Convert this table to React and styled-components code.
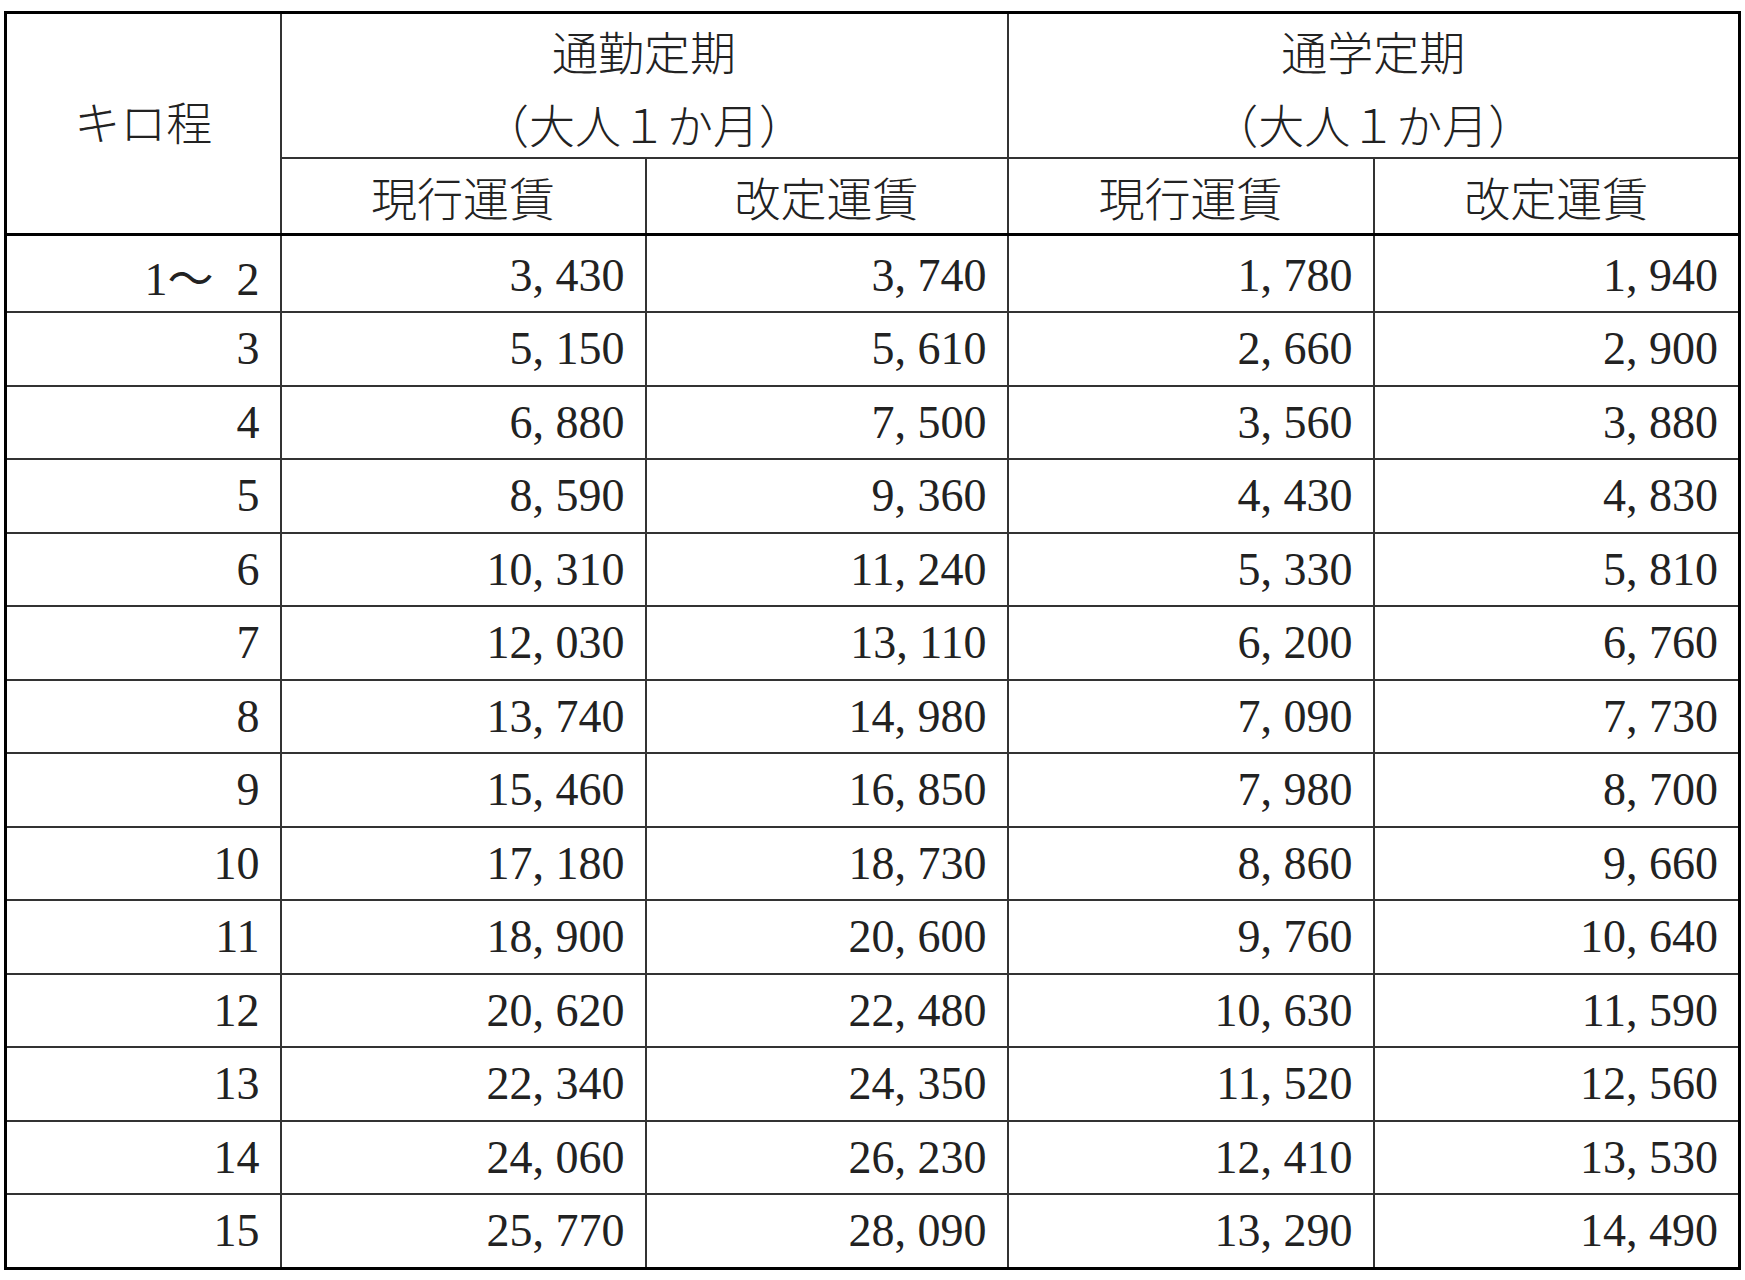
import React from 'react';
import styled, { createGlobalStyle } from 'styled-components';

const GlobalStyle = createGlobalStyle`
  html, body {
    margin: 0;
    background: #fff;
  }
`;

const Page = styled.div`
  padding: 11px 0 0 4px;
`;

const Table = styled.table`
  width: 1734px;
  table-layout: fixed;
  border-collapse: collapse;
  border: 3px solid #000;
  color: #222;
`;

const Col = styled.col`
  width: ${props => props.$w}px;
`;

const HeadCell = styled.th`
  font-family: "Noto Sans CJK JP", sans-serif;
  font-weight: 300;
  font-size: 46px;
  line-height: 1;
  padding: 0;
  border: 2px solid #333;
  border-bottom: ${props => (props.$thick ? '3px solid #000' : '2px solid #333')};
  height: ${props => props.$h}px;
  vertical-align: ${props => (props.$top ? 'top' : 'middle')};
`;

const CornerCell = styled(HeadCell)`
  padding-bottom: 8px;
`;

const GroupTitle = styled.div`
  display: flex;
  flex-direction: column;
  align-items: center;
  gap: 27px;
  padding-top: 13px;
`;

const Cell = styled.td`
  font-family: "Liberation Serif", "Noto Sans CJK JP", serif;
  font-size: 46px;
  text-align: right;
  padding: ${props => (props.$first ? '3px' : '0')} 20px 0 0;
  height: ${props => (props.$first ? 72 : 71.5)}px;
  border: 2px solid #333;
  white-space: pre;
`;

const widths = [275, 365, 362, 366, 366];

const rows = [
  ['1～  2', '3, 430', '3, 740', '1, 780', '1, 940'],
  ['3', '5, 150', '5, 610', '2, 660', '2, 900'],
  ['4', '6, 880', '7, 500', '3, 560', '3, 880'],
  ['5', '8, 590', '9, 360', '4, 430', '4, 830'],
  ['6', '10, 310', '11, 240', '5, 330', '5, 810'],
  ['7', '12, 030', '13, 110', '6, 200', '6, 760'],
  ['8', '13, 740', '14, 980', '7, 090', '7, 730'],
  ['9', '15, 460', '16, 850', '7, 980', '8, 700'],
  ['10', '17, 180', '18, 730', '8, 860', '9, 660'],
  ['11', '18, 900', '20, 600', '9, 760', '10, 640'],
  ['12', '20, 620', '22, 480', '10, 630', '11, 590'],
  ['13', '22, 340', '24, 350', '11, 520', '12, 560'],
  ['14', '24, 060', '26, 230', '12, 410', '13, 530'],
  ['15', '25, 770', '28, 090', '13, 290', '14, 490'],
];

const groups = ['通勤定期', '通学定期'];

export default function App() {
  return (
    <Page>
      <GlobalStyle />
      <Table>
        <colgroup>
          {widths.map((w, i) => (
            <Col key={i} $w={w} />
          ))}
        </colgroup>
        <thead>
          <tr>
            <CornerCell rowSpan={2} $thick>キロ程</CornerCell>
            {groups.map(g => (
              <HeadCell key={g} colSpan={2} $h={143} $top>
                <GroupTitle>
                  <span>{g}</span>
                  <span>（大人１か月）</span>
                </GroupTitle>
              </HeadCell>
            ))}
          </tr>
          <tr>
            {groups.map(g => (
              <React.Fragment key={g}>
                <HeadCell $thick $h={74}>現行運賃</HeadCell>
                <HeadCell $thick $h={74}>改定運賃</HeadCell>
              </React.Fragment>
            ))}
          </tr>
        </thead>
        <tbody>
          {rows.map((r, ri) => (
            <tr key={r[0]}>
              {r.map((v, i) => (
                <Cell key={i} $first={ri === 0}>{v}</Cell>
              ))}
            </tr>
          ))}
        </tbody>
      </Table>
    </Page>
  );
}
